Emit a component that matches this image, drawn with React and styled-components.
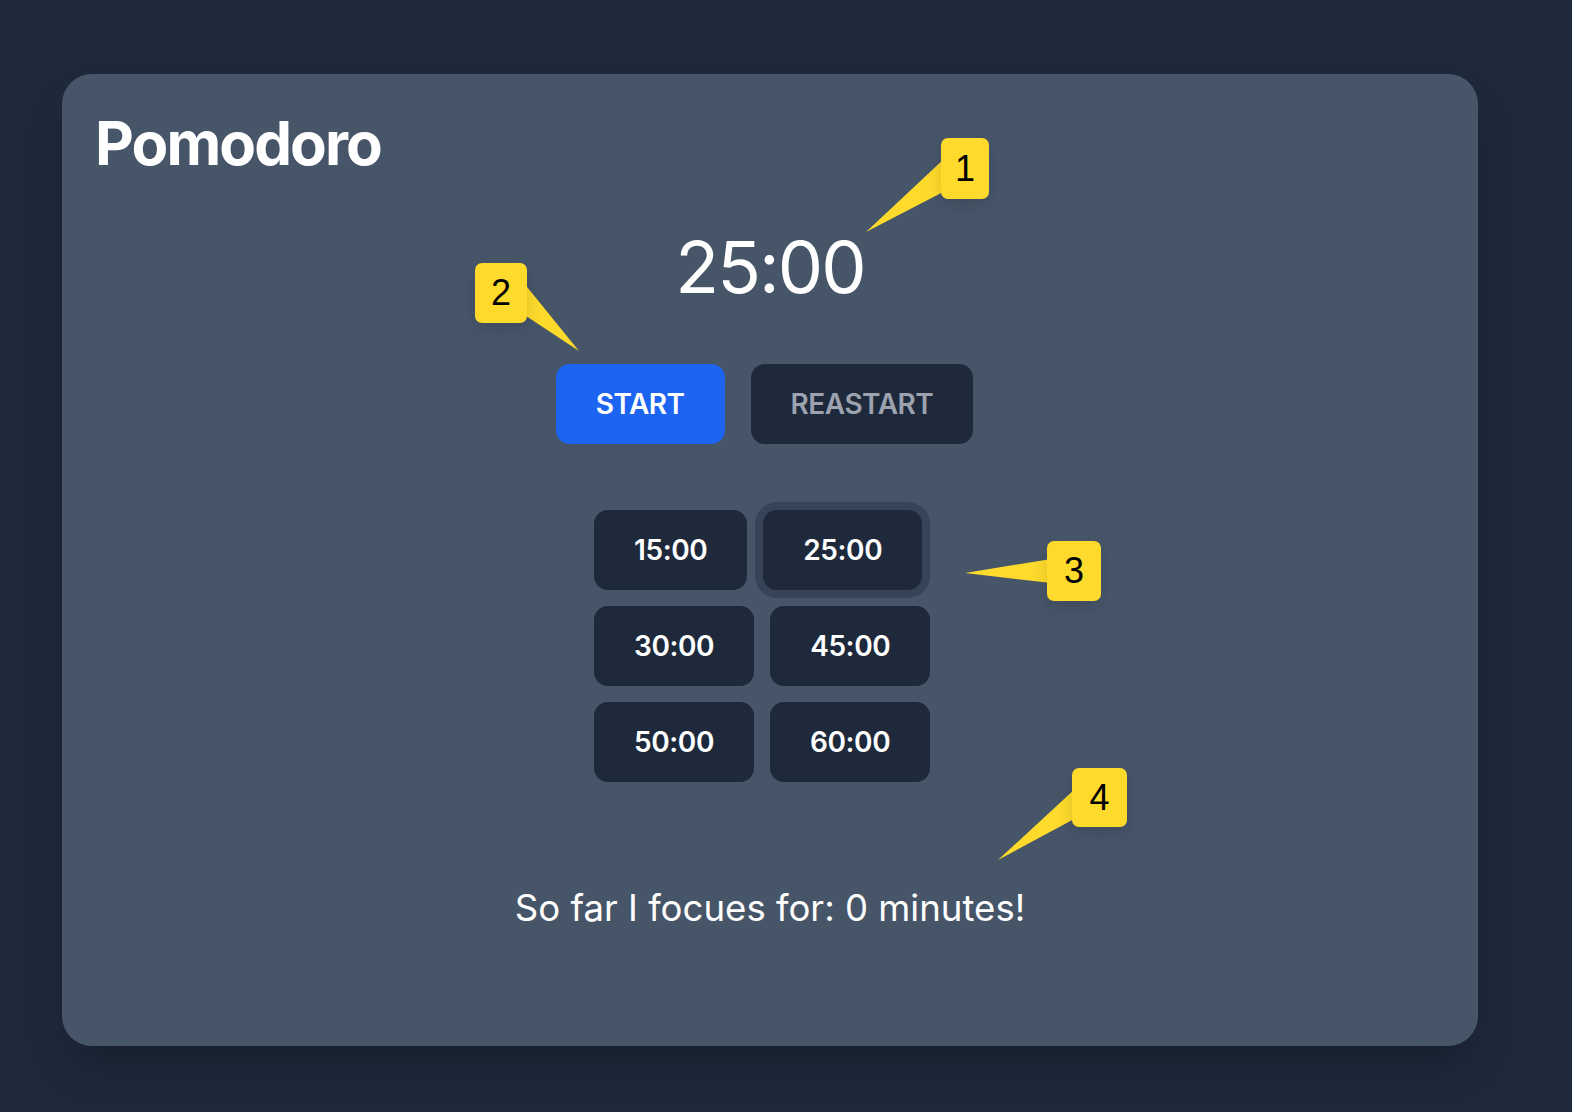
import styled, { createGlobalStyle } from "styled-components";
import { useState } from "react";

const GlobalStyle = createGlobalStyle`
  html, body {
    margin: 0;
    padding: 0;
    background: #1e293b;
  }
  body {
    font-family: Inter, "Noto Sans", sans-serif;
    color: #ffffff;
  }
`;

const presets = ["15:00", "25:00", "30:00", "45:00", "50:00", "60:00"];

const callouts = [
  { n: 1, x: 941, y: 138, w: 48, h: 61, pts: "945,158 945,191 866,232" },
  { n: 2, x: 475, y: 263, w: 52, h: 60, pts: "523,282 523,314 579,351" },
  { n: 3, x: 1047, y: 541, w: 54, h: 60, pts: "1051,559 1051,583 965,573" },
  { n: 4, x: 1072, y: 768, w: 55, h: 59, pts: "1076,788 1076,818 998,860" },
];

export default function App() {
  const [selected, setSelected] = useState("25:00");
  return (
    <Page>
      <GlobalStyle />
      <Card>
        <Title>Pomodoro</Title>
        <Timer>{selected}</Timer>
        <Controls>
          <ActionButton $primary>START</ActionButton>
          <ActionButton>REASTART</ActionButton>
        </Controls>
        <Presets>
          {presets.map((p) => (
            <PresetButton
              key={p}
              $active={p === selected}
              onClick={() => setSelected(p)}
            >
              {p}
            </PresetButton>
          ))}
        </Presets>
        <Summary>So far I focues for: 0 minutes!</Summary>
      </Card>

      <Pointers width="1572" height="1112" viewBox="0 0 1572 1112">
        {callouts.map((c) => (
          <polygon key={c.n} points={c.pts} fill="#fdda2c" />
        ))}
      </Pointers>
      {callouts.map((c) => (
        <Badge
          key={c.n}
          style={{ left: c.x, top: c.y, width: c.w, height: c.h }}
        >
          {c.n}
        </Badge>
      ))}
    </Page>
  );
}

const Page = styled.div`
  position: relative;
  width: 1572px;
  height: 1112px;
  box-sizing: border-box;
  padding: 74px 94px 66px 62px;
  overflow: hidden;
`;

const Card = styled.div`
  box-sizing: border-box;
  width: 1416px;
  height: 972px;
  background: #475569;
  border-radius: 30px;
  box-shadow: 0 25px 50px -12px rgba(0, 0, 0, 0.3);
  padding: 39px 31px 0;
  display: flex;
  flex-direction: column;
  align-items: center;
`;

const Title = styled.h1`
  align-self: flex-start;
  margin: 0 0 0 2px;
  font-size: 60px;
  line-height: 60px;
  font-weight: 700;
  letter-spacing: -1.9px;
`;

const Timer = styled.div`
  margin-top: 58px;
  font-size: 72px;
  line-height: 72px;
  font-weight: 400;
  letter-spacing: -2px;
`;

const Controls = styled.div`
  margin-top: 61px;
  display: flex;
  gap: 26px;
  padding-right: 11px;
`;

const ActionButton = styled.button`
  height: 80px;
  padding: 0 40px;
  border: none;
  border-radius: 14px;
  font-family: Inter, "Noto Sans", sans-serif;
  font-size: 28px;
  font-weight: 600;
  letter-spacing: -0.5px;
  background: ${({ $primary }) => ($primary ? "#1d64f1" : "#1e293b")};
  color: ${({ $primary }) => ($primary ? "#ffffff" : "#9ca3af")};
  cursor: pointer;
`;

const Presets = styled.div`
  margin-top: 66px;
  width: 352px;
  display: flex;
  flex-wrap: wrap;
  gap: 16px;
`;

const PresetButton = styled.button`
  height: 80px;
  padding: 0 40px;
  border: none;
  border-radius: 14px;
  background: #1e293b;
  color: #ffffff;
  font-family: Inter, "Noto Sans", sans-serif;
  font-size: 28px;
  font-weight: 600;
  letter-spacing: -0.4px;
  cursor: pointer;
  box-shadow: ${({ $active }) => ($active ? "0 0 0 8px #374357" : "none")};
`;

const Summary = styled.p`
  margin: 108px 0 0;
  font-size: 36.6px;
  line-height: 36px;
  font-weight: 400;
`;

const Pointers = styled.svg`
  position: absolute;
  left: 0;
  top: 0;
  pointer-events: none;
`;

const Badge = styled.div`
  position: absolute;
  box-sizing: border-box;
  display: flex;
  align-items: center;
  justify-content: center;
  background: #fdda2c;
  border-radius: 7px;
  color: #000000;
  font-family: "Liberation Sans", Arial, sans-serif;
  font-size: 36px;
  line-height: 1;
  box-shadow: 0 6px 16px rgba(0, 0, 0, 0.12);
`;
